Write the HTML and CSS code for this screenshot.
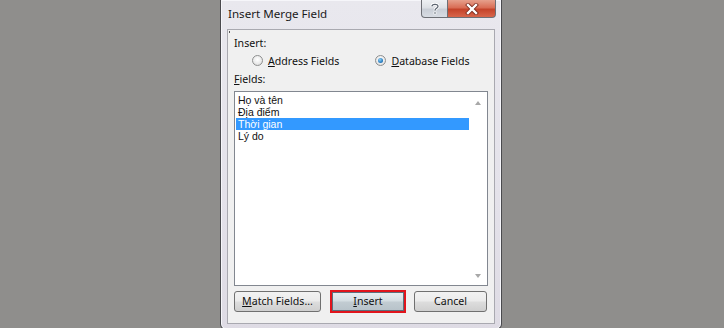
FILE: index.html
```html
<!DOCTYPE html>
<html>
<head>
<meta charset="utf-8">
<link rel="stylesheet" href="styles.css">
</head>
<body>
<div class="dialog">
  <div class="titlebar">
    <span class="title">Insert Merge Field</span>
    <div class="caption-btns">
      <div class="cbtn help"><svg width="12" height="13" viewBox="0 0 12 13"><path d="M3 4.2 C3 1.8 9 1.6 9 4.3 C9 6.3 6 6.2 6 8.4" fill="none" stroke="#fff" stroke-width="3"/><path d="M3 4.2 C3 1.8 9 1.6 9 4.3 C9 6.3 6 6.2 6 8.4" fill="none" stroke="#5b6470" stroke-width="1.3"/><rect x="4.6" y="9.6" width="2.8" height="2.8" fill="#fff"/><rect x="5.3" y="10.3" width="1.4" height="1.4" fill="#5b6470"/></svg></div>
      <div class="cbtn close"><svg width="14" height="12" viewBox="0 0 14 12"><path d="M3 2 L11 10 M11 2 L3 10" stroke="#7a2a1c" stroke-width="4" stroke-linecap="square"/><path d="M3 2 L11 10 M11 2 L3 10" stroke="#fff" stroke-width="2.4" stroke-linecap="square"/></svg></div>
    </div>
  </div>
  <div class="panel">
    <span class="dot"></span>
    <div class="label">Insert:</div>
    <div class="radios">
      <label class="radio"><span class="rc"></span><span><u>A</u>ddress Fields</span></label>
      <label class="radio"><span class="rc on"></span><span><u>D</u>atabase Fields</span></label>
    </div>
    <div class="label fields"><u>F</u>ields:</div>
    <div class="listbox">
      <ul class="items">
        <li>Họ và tên</li>
        <li>Địa điểm</li>
        <li class="sel">Thời gian</li>
        <li>Lý do</li>
      </ul>
      <div class="scroll">
        <span class="arrow up"></span>
        <span class="arrow down"></span>
      </div>
    </div>
    <div class="buttons">
      <div class="btn match"><u>M</u>atch Fields...</div>
      <div class="hl"><div class="btn insert"><u>I</u>nsert</div></div>
      <div class="btn cancel">Cancel</div>
    </div>
  </div>
</div>
</body>
</html>
```
FILE: styles.css
```css
html, body {
  margin: 0;
  padding: 0;
}
body {
  width: 724px;
  height: 328px;
  background: #8f8e8c;
  font-family: "Noto Sans", "Open Sans", sans-serif;
  font-size: 10.6px;
  color: #111;
  overflow: hidden;
}
.dialog {
  margin-left: 220px;
  width: 268px;
  height: 324px;
  border: 1px solid #4a4a4e;
  border-top: none;
  border-radius: 0 0 6px 6px;
  background: linear-gradient(to bottom, #e9e8ee 0%, #e4e2ea 60%, #dedbe4 100%);
  box-shadow: inset 0 0 0 1px #f6f6fa;
  padding: 0 6px 5px 6px;
  display: flex;
  flex-direction: column;
}
.titlebar {
  height: 29px;
  flex: none;
  display: flex;
  justify-content: space-between;
  align-items: flex-start;
}
.title {
  padding-left: 1px;
  margin-top: 6px;
  font-size: 11.6px;
  color: #1a1a1a;
}
.caption-btns {
  display: flex;
  margin-right: -1px;
}
.cbtn {
  height: 18px;
  display: flex;
  align-items: center;
  justify-content: center;
  border: 1px solid #6d6f75;
  border-top: none;
  box-sizing: border-box;
}
.help {
  width: 27px;
  border-radius: 0 0 0 4px;
  background: linear-gradient(to bottom, #eef0f3 0%, #dde0e5 45%, #c9ced6 55%, #d8dce3 100%);
}
.close {
  width: 48px;
  border-left: none;
  border-radius: 0 0 4px 0;
  background: linear-gradient(to bottom, #e6a08c 0%, #d96d55 45%, #c4432a 55%, #d8664b 100%);
}
.panel {
  flex: 1;
  border: 1px solid #a9a9b0;
  background: #f0f0f0;
  padding: 6px 6px 5px 6px;
  display: flex;
  flex-direction: column;
  position: relative;
}
.dot {
  position: absolute;
  left: 1px;
  top: 1px;
  width: 1px;
  height: 2px;
  background: #555;
}
.label {
  line-height: 15px;
}
.radios {
  display: flex;
  height: 17px;
  align-items: center;
  padding-left: 18px;
  margin-top: 1px;
}
.radio {
  display: flex;
  align-items: center;
  gap: 5px;
}
.radio + .radio {
  margin-left: 36px;
}
.rc {
  width: 11px;
  height: 11px;
  border-radius: 50%;
  border: 1px solid #8e8f8f;
  box-sizing: border-box;
  background: radial-gradient(circle at 50% 40%, #ffffff 0%, #e9e9e9 60%, #cfcfcf 100%);
  position: relative;
}
.rc.on::after {
  content: "";
  position: absolute;
  left: 2px;
  top: 2px;
  width: 5px;
  height: 5px;
  border-radius: 50%;
  background: radial-gradient(circle at 40% 35%, #8fd0f5 0%, #2a7fc2 60%, #1b4f8a 100%);
}
.fields {
  margin-top: 3px;
}
.listbox {
  margin-top: 4px;
  height: 195px;
  box-sizing: border-box;
  border: 1px solid #828790;
  background: #fff;
  display: flex;
  padding: 1px;
}
.items {
  list-style: none;
  margin: 0;
  padding: 1px 0 0 0;
  flex: 1;
  font-family: "Liberation Sans", Arial, sans-serif;
  font-size: 10.5px;
}
.items li {
  height: 12px;
  line-height: 12px;
  padding-left: 2px;
  white-space: nowrap;
}
.items li.sel {
  background: #3399ff;
  color: #fff;
}
.scroll {
  width: 17px;
  display: flex;
  flex-direction: column;
  justify-content: space-between;
  align-items: center;
  padding: 8px 0 6px 0;
}
.arrow {
  width: 0;
  height: 0;
  border-left: 3.5px solid transparent;
  border-right: 3.5px solid transparent;
}
.arrow.up {
  border-bottom: 4px solid #a8a8a8;
}
.arrow.down {
  border-top: 4px solid #a8a8a8;
}
.buttons {
  margin-top: 4px;
  display: flex;
  align-items: center;
  gap: 8px;
}
.btn {
  height: 21px;
  box-sizing: border-box;
  border: 1px solid #707070;
  border-radius: 3px;
  background: linear-gradient(to bottom, #f2f2f2 0%, #ebebeb 48%, #dddddd 52%, #cfcfcf 100%);
  display: flex;
  align-items: center;
  justify-content: center;
  line-height: 15px;
}
.match {
  width: 87px;
}
.hl {
  border: 2px solid #e0141c;
  margin-left: 1px;
  display: flex;
}
.insert {
  width: 72px;
  height: 19px;
  border-color: #5b6f7c;
  border-radius: 0;
  background: linear-gradient(to bottom, #e6ecef 0%, #d4dde2 48%, #c2ccd2 52%, #b8c3ca 100%);
}
.cancel {
  width: 73px;
}
```
